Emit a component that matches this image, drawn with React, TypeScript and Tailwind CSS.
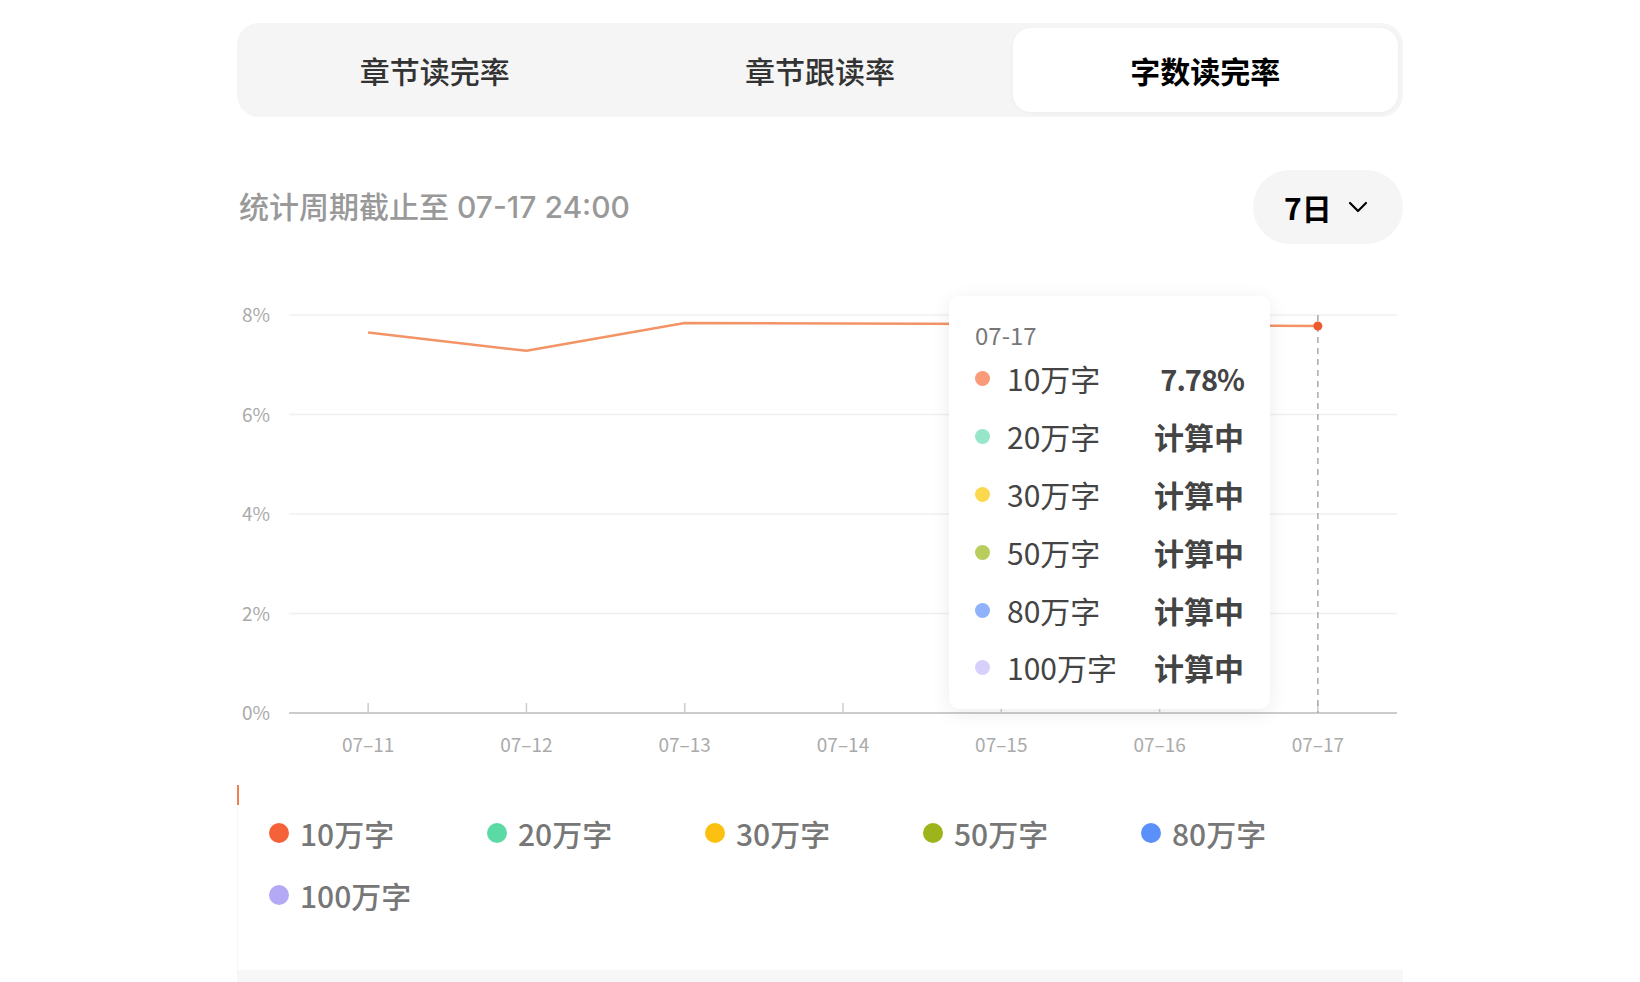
import { ChevronDown } from "lucide-react";

const tabs = ["章节读完率", "章节跟读率", "字数读完率"];

const series = [
  { name: "10万字", color: "#f5623a", soft: "#f99a78", value: "7.78%" },
  { name: "20万字", color: "#5cdaa5", soft: "#97e6c9", value: "计算中" },
  { name: "30万字", color: "#fcc010", soft: "#fcd84e", value: "计算中" },
  { name: "50万字", color: "#9db41b", soft: "#b9cd5d", value: "计算中" },
  { name: "80万字", color: "#5b8ff9", soft: "#8fb2fa", value: "计算中" },
  { name: "100万字", color: "#b3a9f5", soft: "#d7d0fa", value: "计算中" },
];

const days = ["07–11", "07–12", "07–13", "07–14", "07–15", "07–16", "07–17"];
const values = [7.65, 7.28, 7.84, 7.83, 7.82, 7.8, 7.78];

// chart geometry (svg coords)
const left = 52;
const right = 1160;
const step = (right - left) / 7;
const y = (v: number) => 453 - v * 49.75;
const x = (i: number) => left + step / 2 + i * step;

function Chart() {
  const pts = values.map((v, i) => `${x(i)},${y(v)}`).join(" ");
  return (
    <svg width="1166" height="510" className="block">
      {[0, 2, 4, 6, 8].map((v) => (
        <g key={v}>
          {v > 0 && <line x1={left} x2={right} y1={y(v)} y2={y(v)} stroke="#f0f0f0" strokeWidth="1.5" />}
          <text x="5" y={y(v) + 7} fontSize="19" fill="#aaaaaa">
            {v}%
          </text>
        </g>
      ))}
      <line x1={left} x2={right} y1={453} y2={453} stroke="#cccccc" strokeWidth="2" />
      {days.map((d, i) => (
        <g key={d}>
          <line x1={x(i)} x2={x(i)} y1={443} y2={453} stroke="#cccccc" strokeWidth="1.5" />
          <text x={x(i)} y={492} fontSize="19" fill="#aaaaaa" textAnchor="middle">
            {d}
          </text>
        </g>
      ))}
      <line x1={x(6)} x2={x(6)} y1={55} y2={453} stroke="#aaaaaa" strokeWidth="1.5" strokeDasharray="6 5" />
      <polyline points={pts} fill="none" stroke="#f29466" strokeWidth="2.5" strokeLinejoin="round" />
      <circle cx={x(6)} cy={y(7.78)} r="4.5" fill="#ee5a2f" />
    </svg>
  );
}

function Tooltip() {
  return (
    <div className="absolute left-[712px] top-[36px] w-[321px] h-[413px] bg-white rounded-[10px] shadow-[0_4px_20px_rgba(0,0,0,0.08)] pt-[24px] pl-[26px] pr-[26px]">
      <div className="h-[30px] flex items-center text-[24px] text-[#777]">07-17</div>
      {series.map((s) => (
        <div key={s.name} className="h-[57.8px] flex items-center">
          <span className="w-[15px] h-[15px] rounded-full shrink-0" style={{ backgroundColor: s.soft }} />
          <span className="ml-[17px] text-[30px] text-[#444]">{s.name}</span>
          {s.value.endsWith("%") ? (
            <span className="ml-auto text-[29px] font-semibold tracking-[-1px] text-[#444]">{s.value}</span>
          ) : (
            <span className="ml-auto text-[30px] font-bold text-[#444]">{s.value}</span>
          )}
        </div>
      ))}
    </div>
  );
}

export default function App() {
  return (
    <div
      className="w-full min-h-[982px] bg-white"
      style={{ fontFamily: '"Noto Sans CJK SC", "Noto Sans", sans-serif' }}
    >
      <div className="w-[1166px] mx-auto pt-[23px]">
        {/* tabs */}
        <div className="h-[94px] rounded-[22px] bg-[#f5f5f5] p-[5px] flex">
          {tabs.map((t, i) => (
            <div
              key={t}
              className={`flex-1 flex items-center justify-center text-[30px] rounded-[18px] ${
                i === 2 ? "bg-white font-bold text-black shadow-[0_1px_4px_rgba(0,0,0,0.04)]" : "font-medium text-[#333]"
              }`}
            >
              {t}
            </div>
          ))}
        </div>

        {/* header */}
        <div className="mt-[53px] flex items-center justify-between">
          <span
            className="pl-[2px] text-[30px] font-medium text-[#999]"
            style={{ fontFamily: 'Inter, "Noto Sans CJK SC", sans-serif' }}
          >
            统计周期截止至 07-17 24:00
          </span>
          <div className="h-[74px] w-[150px] rounded-full bg-[#f5f5f5] flex items-center pl-[31px]">
            <span className="text-[30px] font-bold text-black">7日</span>
            <ChevronDown className="ml-[10px] w-[32px] h-[32px] text-black" strokeWidth={1.6} />
          </div>
        </div>

        {/* chart */}
        <div className="relative mt-[16px] h-[510px]">
          <Chart />
          <Tooltip />
        </div>

        <div className="border-l border-[#f6f6f6]">
          <div className="mt-[15px] w-[2px] h-[20px] bg-[#f08050] -ml-px" />
          {/* legend */}
          <div className="flex flex-wrap gap-y-[6px] pl-[31px]">
            {series.map((s) => (
              <div key={s.name} className="w-[218px] h-[56px] flex items-center">
                <span className="w-[20px] h-[20px] rounded-full shrink-0" style={{ backgroundColor: s.color }} />
                <span className="ml-[11px] text-[30px] font-medium text-[#777]">{s.name}</span>
              </div>
            ))}
          </div>
          <div className="mt-[47px] h-[20px] bg-[#f7f7f7]" />
        </div>
      </div>
    </div>
  );
}
